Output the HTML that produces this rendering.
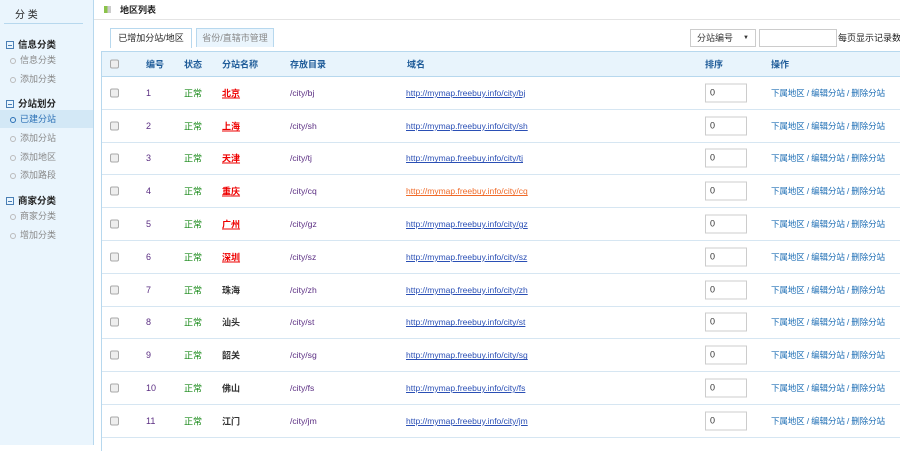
<!DOCTYPE html><html><head><meta charset="utf-8"><style>
*{margin:0;padding:0;box-sizing:border-box}
body{width:900px;height:445px;overflow:hidden;background:#fff;font-family:"Liberation Sans","Noto Sans CJK SC",sans-serif;font-size:9px;color:#333;position:relative}
.side{position:absolute;left:0;top:0;width:94px;height:445px;background:#eaf5fd;border-right:1px solid #b7d8ee}
.side .t{position:absolute;left:4px;top:5px;width:79px;height:19px;border-bottom:1px solid #b7d8ee;font-size:10px;padding-left:11px;line-height:22px;color:#222}
.g{position:absolute;left:6px;font-size:9.5px;font-weight:bold;color:#222}
.g i{display:inline-block;width:8px;height:8px;border:1px solid #4a7fb5;margin-right:4px;vertical-align:-1px;position:relative}
.g i:after{content:"";position:absolute;left:1px;top:2.5px;width:4px;height:1px;background:#4a7fb5}
.it{position:absolute;left:0;width:93px;height:18px;line-height:18px;padding-left:20px;color:#888;font-size:9px}
.it:before{content:"";position:absolute;left:10px;top:7px;width:4px;height:4px;border:1px solid #bbb;border-radius:50%}
.it.on{background:#d3e8f6;color:#2a6fb5}.it.on:before{border-color:#2a6fb5}
.top{position:absolute;left:94px;top:0;right:0;height:20px;border-bottom:1px solid #e4e4e4;font-weight:bold;font-size:9px;line-height:20px;padding-left:26px;color:#222}
.top .ic{position:absolute;left:10px;top:6px;width:7px;height:7px;background:linear-gradient(90deg,#8bc34a 50%,#ccc 50%)}
.tab{position:absolute;top:28px;height:19px;line-height:19px;text-align:center;font-size:9px;border:1px solid #b7d8ee;border-bottom:none}
.tab1{left:110px;width:82px;background:#fff;color:#222;height:20px}
.tab2{left:196px;width:78px;background:#eaf5fd;color:#888}
.sel{position:absolute;left:690px;top:29px;width:66px;height:18px;border:1px solid #ccc;font-size:9px;line-height:16px;padding-left:6px;color:#333}
.sel:after{content:"▼";position:absolute;right:6px;font-size:6px}
.inp{position:absolute;left:759px;top:29px;width:78px;height:18px;border:1px solid #ccc}
.lbl{position:absolute;left:838px;top:29px;line-height:18px;font-size:9px;color:#222;white-space:nowrap}
.tbl{position:absolute;left:101px;top:51px;width:820px;height:400px;border-left:1px solid #b7d8ee;border-top:1px solid #b7d8ee}
.hd{position:absolute;left:0;top:0;width:100%;height:25px;background:#e8f4fc;border-bottom:1px solid #b7d8ee;font-weight:bold;color:#1f5c99;font-size:9px}
.row{position:absolute;left:0;width:100%;border-bottom:1px solid #d6e6f2;height:32.8px}
.c{position:absolute;top:50%;transform:translateY(-50%);white-space:nowrap}
.cb{width:9px;height:9px;border:1px solid #aaa;border-radius:2px;background:#eee;left:8px}
.num{left:44px;color:#5a2d82}.st{left:82px;color:#1a8a1a}.nm{left:120px;font-weight:bold}
.nm.r{color:#e00;text-decoration:underline}.dir{left:188px;color:#5a2d82;font-size:8.6px}
.url{left:304px;color:#2a4fb5;text-decoration:underline;font-size:8.5px}.url.o{color:#f06a28}
.ord{left:603px;width:42px;height:19px;border:1px solid #ccc;padding-left:4px;line-height:19px;font-size:9px;display:flex;align-items:center}
.op{left:669px;color:#1f6fb5;font-size:8.6px;letter-spacing:-0.2px}
</style></head><body>
<div class="side"><div class="t">分 类</div>
<div class="g" style="top:37px"><i></i>信息分类</div>
<div class="it" style="top:51px">信息分类</div>
<div class="it" style="top:70px">添加分类</div>
<div class="g" style="top:96px"><i></i>分站划分</div>
<div class="it on" style="top:110px">已建分站</div>
<div class="it" style="top:129px">添加分站</div>
<div class="it" style="top:148px">添加地区</div>
<div class="it" style="top:166px">添加路段</div>
<div class="g" style="top:193px"><i></i>商家分类</div>
<div class="it" style="top:207px">商家分类</div>
<div class="it" style="top:226px">增加分类</div>
</div>
<div class="top"><span class="ic"></span>地区列表</div>
<div class="tab tab1">已增加分站/地区</div><div class="tab tab2">省份/直辖市管理</div>
<div class="sel">分站编号</div><div class="inp"></div><div class="lbl">每页显示记录数</div>
<div class="tbl">
<div class="hd"><span class="c cb"></span><span class="c" style="left:44px">编号</span><span class="c" style="left:82px">状态</span><span class="c" style="left:120px">分站名称</span><span class="c" style="left:188px">存放目录</span><span class="c" style="left:305px">域名</span><span class="c" style="left:603px">排序</span><span class="c" style="left:669px">操作</span></div>
<div class="row" style="top:25px"><span class="c cb"></span><span class="c num">1</span><span class="c st">正常</span><span class="c nm r">北京</span><span class="c dir">/city/bj</span><span class="c url">http://mymap.freebuy.info/city/bj</span><span class="c ord">0</span><span class="c op">下属地区 / 编辑分站 / 删除分站</span></div>
<div class="row" style="top:57.8px"><span class="c cb"></span><span class="c num">2</span><span class="c st">正常</span><span class="c nm r">上海</span><span class="c dir">/city/sh</span><span class="c url">http://mymap.freebuy.info/city/sh</span><span class="c ord">0</span><span class="c op">下属地区 / 编辑分站 / 删除分站</span></div>
<div class="row" style="top:90.6px"><span class="c cb"></span><span class="c num">3</span><span class="c st">正常</span><span class="c nm r">天津</span><span class="c dir">/city/tj</span><span class="c url">http://mymap.freebuy.info/city/tj</span><span class="c ord">0</span><span class="c op">下属地区 / 编辑分站 / 删除分站</span></div>
<div class="row" style="top:123.4px"><span class="c cb"></span><span class="c num">4</span><span class="c st">正常</span><span class="c nm r">重庆</span><span class="c dir">/city/cq</span><span class="c url o">http://mymap.freebuy.info/city/cq</span><span class="c ord">0</span><span class="c op">下属地区 / 编辑分站 / 删除分站</span></div>
<div class="row" style="top:156.2px"><span class="c cb"></span><span class="c num">5</span><span class="c st">正常</span><span class="c nm r">广州</span><span class="c dir">/city/gz</span><span class="c url">http://mymap.freebuy.info/city/gz</span><span class="c ord">0</span><span class="c op">下属地区 / 编辑分站 / 删除分站</span></div>
<div class="row" style="top:189px"><span class="c cb"></span><span class="c num">6</span><span class="c st">正常</span><span class="c nm r">深圳</span><span class="c dir">/city/sz</span><span class="c url">http://mymap.freebuy.info/city/sz</span><span class="c ord">0</span><span class="c op">下属地区 / 编辑分站 / 删除分站</span></div>
<div class="row" style="top:221.8px"><span class="c cb"></span><span class="c num">7</span><span class="c st">正常</span><span class="c nm">珠海</span><span class="c dir">/city/zh</span><span class="c url">http://mymap.freebuy.info/city/zh</span><span class="c ord">0</span><span class="c op">下属地区 / 编辑分站 / 删除分站</span></div>
<div class="row" style="top:254.6px"><span class="c cb"></span><span class="c num">8</span><span class="c st">正常</span><span class="c nm">汕头</span><span class="c dir">/city/st</span><span class="c url">http://mymap.freebuy.info/city/st</span><span class="c ord">0</span><span class="c op">下属地区 / 编辑分站 / 删除分站</span></div>
<div class="row" style="top:287.4px"><span class="c cb"></span><span class="c num">9</span><span class="c st">正常</span><span class="c nm">韶关</span><span class="c dir">/city/sg</span><span class="c url">http://mymap.freebuy.info/city/sg</span><span class="c ord">0</span><span class="c op">下属地区 / 编辑分站 / 删除分站</span></div>
<div class="row" style="top:320.2px"><span class="c cb"></span><span class="c num">10</span><span class="c st">正常</span><span class="c nm">佛山</span><span class="c dir">/city/fs</span><span class="c url">http://mymap.freebuy.info/city/fs</span><span class="c ord">0</span><span class="c op">下属地区 / 编辑分站 / 删除分站</span></div>
<div class="row" style="top:353px"><span class="c cb"></span><span class="c num">11</span><span class="c st">正常</span><span class="c nm">江门</span><span class="c dir">/city/jm</span><span class="c url">http://mymap.freebuy.info/city/jm</span><span class="c ord">0</span><span class="c op">下属地区 / 编辑分站 / 删除分站</span></div>
</div>
</body></html>
